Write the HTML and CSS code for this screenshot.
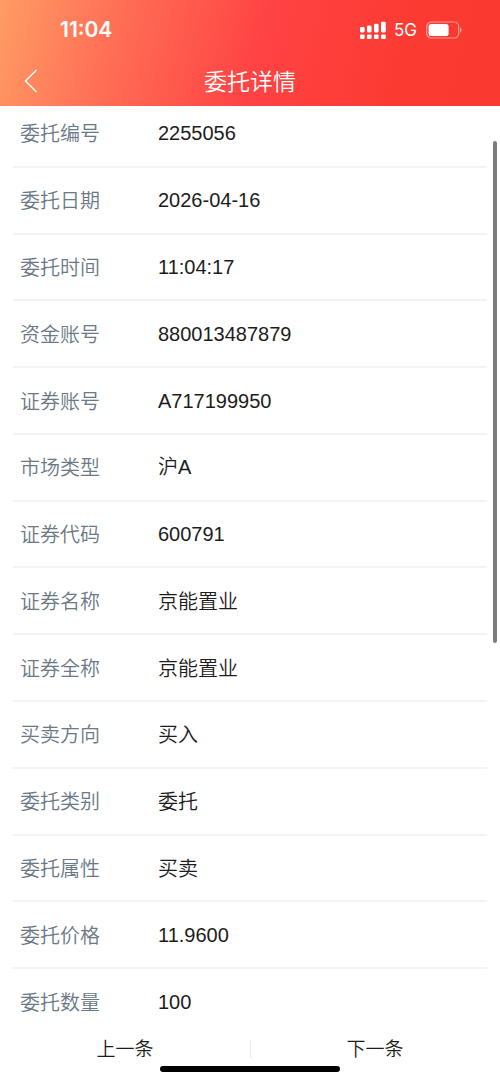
FILE: index.html
```html
<!DOCTYPE html>
<html lang="zh-CN">
<head>
<meta charset="utf-8">
<meta name="viewport" content="width=device-width, initial-scale=1">
<title>委托详情</title>
<link rel="stylesheet" href="styles.css">
</head>
<body>
<div class="app">
  <header class="header">
    <div class="status">
      <span class="time">11:04</span>
      <div class="indicators">
        <svg class="signal" width="26" height="18" viewBox="0 0 26 18" fill="#fff" aria-hidden="true">
          <rect x="0" y="6" width="4.6" height="5.4" rx="1.3"/><rect x="7" y="4.5" width="4.6" height="6.9" rx="1.3"/><rect x="14" y="2.7" width="4.6" height="8.7" rx="1.3"/><rect x="21" y="0.7" width="4.8" height="10.7" rx="1.3"/>
          <rect x="0" y="13.4" width="4.6" height="4.6" rx="1.2"/><rect x="7" y="13.4" width="4.6" height="4.6" rx="1.2"/><rect x="14" y="13.4" width="4.6" height="4.6" rx="1.2"/><rect x="21" y="13.4" width="4.8" height="4.6" rx="1.2"/>
        </svg>
        <span class="network">5G</span>
        <svg class="battery" width="37" height="18" viewBox="0 0 37 18" aria-hidden="true">
          <rect x="0.7" y="1" width="32" height="16" rx="4.6" fill="none" stroke="#fff" stroke-opacity=".5" stroke-width="1.2"/>
          <rect x="2.6" y="3" width="20" height="12" rx="2.6" fill="#fff"/>
          <path d="M34.2 6.500c1.8.7 1.8 4.300 0 5z" fill="#fff" fill-opacity=".6"/>
        </svg>
      </div>
    </div>
    <div class="titlebar">
      <button class="back" type="button" aria-label="返回">
        <svg width="14" height="24" viewBox="0 0 14 24" fill="none" stroke="#fff" stroke-width="1.5" aria-hidden="true"><path d="M12.500 1L1.500 12l11 11"/></svg>
      </button>
      <h1 class="title">委托详情</h1>
    </div>
  </header>
  <main class="content">
    <dl class="list">
      <div class="row"><dt>委托编号</dt><dd>2255056</dd></div>
      <div class="row"><dt>委托日期</dt><dd>2026-04-16</dd></div>
      <div class="row"><dt>委托时间</dt><dd>11:04:17</dd></div>
      <div class="row"><dt>资金账号</dt><dd>880013487879</dd></div>
      <div class="row"><dt>证券账号</dt><dd>A717199950</dd></div>
      <div class="row"><dt>市场类型</dt><dd>沪A</dd></div>
      <div class="row"><dt>证券代码</dt><dd>600791</dd></div>
      <div class="row"><dt>证券名称</dt><dd class="text">京能置业</dd></div>
      <div class="row"><dt>证券全称</dt><dd class="text">京能置业</dd></div>
      <div class="row"><dt>买卖方向</dt><dd class="text">买入</dd></div>
      <div class="row"><dt>委托类别</dt><dd class="text">委托</dd></div>
      <div class="row"><dt>委托属性</dt><dd class="text">买卖</dd></div>
      <div class="row"><dt>委托价格</dt><dd>11.9600</dd></div>
      <div class="row"><dt>委托数量</dt><dd>100</dd></div>
    </dl>
    <div class="scrollbar"></div>
  </main>
  <footer class="footer">
    <nav class="pager">
      <button type="button">上一条</button>
      <button type="button">下一条</button>
    </nav>
    <div class="home"></div>
  </footer>
</div>
</body>
</html>
```
FILE: styles.css
```css
* {
  box-sizing: border-box;
}

body {
  margin: 0;
  background: #fff;
  color: #1c1c1c;
  font-family: "Liberation Sans", "Noto Sans CJK SC", sans-serif;
}

button {
  padding: 0;
  border: 0;
  background: none;
  color: inherit;
  font: inherit;
}

.app {
  display: flex;
  flex-direction: column;
  min-height: 100vh;
}

.header {
  position: relative;
  z-index: 1;
  padding-top: 16px;
  background: linear-gradient(105deg, #ff9c64 0%, #ff6f56 23%, #ff4243 52%, #fb3b32 80%, #fa3a31 100%);
  color: #fff;
}

.status {
  display: flex;
  align-items: center;
  justify-content: space-between;
  height: 28px;
  padding: 0 37px 0 60px;
}

.time {
  font: 600 21px/28px Inter, sans-serif;
}

.indicators {
  display: flex;
  align-items: center;
}

.network {
  margin: 0 9px 0 8px;
  font: 400 17px/28px Inter, sans-serif;
}

.titlebar {
  display: grid;
  grid-template-columns: 60px 1fr 60px;
  align-items: center;
  height: 62px;
  padding-top: 12px;
}

.back {
  display: flex;
  align-items: center;
  height: 44px;
  padding-left: 24px;
}

.title {
  margin: 0;
  padding-top: 2px;
  font-size: 23px;
  font-weight: 350;
  line-height: 32px;
  text-align: center;
}

.content {
  position: relative;
  display: grid;
  flex: 1;
  margin-top: -5px;
}

.list {
  display: grid;
  grid-auto-rows: 1fr;
  margin: 0;
  padding: 0 13px;
}

.row {
  display: grid;
  grid-template-columns: 138px 1fr;
  align-items: center;
  padding: 0 7px;
  border-bottom: 2px solid #f3f3f3;
  font-size: 20px;
  font-weight: 350;
  line-height: 30px;
}

.row:last-child {
  border-bottom-color: transparent;
}

.row dt {
  padding-top: 2px;
  color: #6b7885;
}

.row dd {
  margin: 0;
}

.row .text {
  padding-top: 2px;
}

.scrollbar {
  position: absolute;
  top: 40px;
  right: 3px;
  width: 4px;
  height: 502px;
  border-radius: 2px;
  background: #7d7d7d;
}

.footer {
  padding-bottom: 10px;
}

.pager {
  display: grid;
  grid-template-columns: 1fr 1fr;
  font-size: 19px;
  font-weight: 350;
  line-height: 24px;
}

.pager button {
  padding-top: 2px;
}

.pager button + button {
  background: linear-gradient(#ebebeb, #ebebeb) left center / 1px 18px no-repeat;
}

.home {
  width: 36%;
  height: 6px;
  margin: 4px auto 0;
  border-radius: 3px;
  background: #000;
}
```
